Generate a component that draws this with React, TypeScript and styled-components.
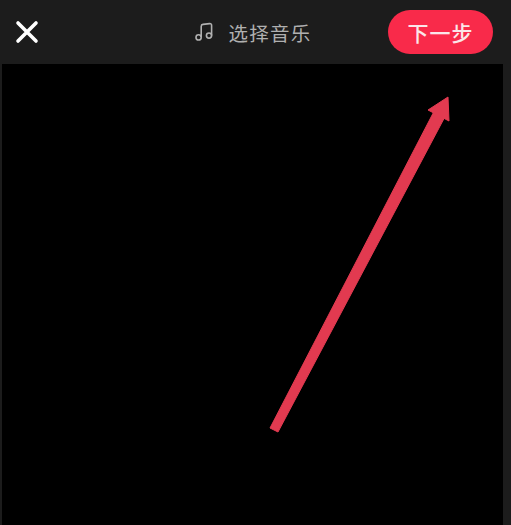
import React from "react";
import styled, { createGlobalStyle } from "styled-components";

const Global = createGlobalStyle`
  html, body { margin: 0; padding: 0; background: #1c1c1c; }
  #root { width: 511px; height: 525px; overflow: hidden; }
`;

const Screen = styled.div`
  width: 511px;
  height: 525px;
  display: flex;
  flex-direction: column;
  background: #1c1c1c;
  font-family: "Noto Sans CJK SC", "Liberation Sans", sans-serif;
`;

const TopBar = styled.header`
  height: 64px;
  flex: none;
  display: flex;
  align-items: center;
  justify-content: space-between;
  padding: 0 18px 0 15px;
  box-sizing: border-box;
`;

const CloseButton = styled.button`
  width: 24px;
  height: 24px;
  padding: 0;
  border: 0;
  background: none;
  display: flex;
`;

const MusicPicker = styled.div`
  display: flex;
  align-items: center;
  gap: 15px;
  color: #b0b0b0;
  font-size: 19.5px;
  letter-spacing: 1.2px;
  margin-left: 78px;
`;

const NextButton = styled.button`
  width: 105px;
  height: 44px;
  border: 0;
  border-radius: 22px;
  background: #f92a4a;
  color: #fbe6e9;
  font-family: inherit;
  font-size: 21px;
  font-weight: 500;
  letter-spacing: 1px;
  padding: 0;
`;

const Stage = styled.main`
  flex: 1;
  margin: 0 8px 0 2px;
  background: #000;
  display: flex;
`;

const Arrow = styled.svg`
  width: 100%;
  height: 100%;
  display: block;
`;

export default function App() {
  return (
    <Screen>
      <Global />
      <TopBar>
        <CloseButton aria-label="关闭">
          <svg width="24" height="24" viewBox="0 0 24 24">
            <path d="M3 3 L21 21 M21 3 L3 21" stroke="#fff" strokeWidth="3.6" strokeLinecap="round" />
          </svg>
        </CloseButton>
        <MusicPicker>
          <svg width="20" height="20" viewBox="0 0 20 20" fill="none" stroke="#b0b0b0" strokeWidth="1.6">
            <circle cx="4.6" cy="15.4" r="2.6" />
            <circle cx="15" cy="13.6" r="2.6" />
            <path d="M7.2 15 V4.4 Q7.2 2.6 9 2.4 L15.6 1.6 Q17.6 1.5 17.6 3.4 V13.4" />
          </svg>
          <span>选择音乐</span>
        </MusicPicker>
        <NextButton>下一步</NextButton>
      </TopBar>
      <Stage>
        <Arrow viewBox="0 0 501 461">
          <path
            d="M268 364 L276 368 L442.3 54 L431.7 48 Z M446 33 L426 46 L447 57 Z"
            fill="#e23a50"
            stroke="#e23a50"
            strokeWidth="1"
            strokeLinejoin="round"
          />
        </Arrow>
      </Stage>
    </Screen>
  );
}
